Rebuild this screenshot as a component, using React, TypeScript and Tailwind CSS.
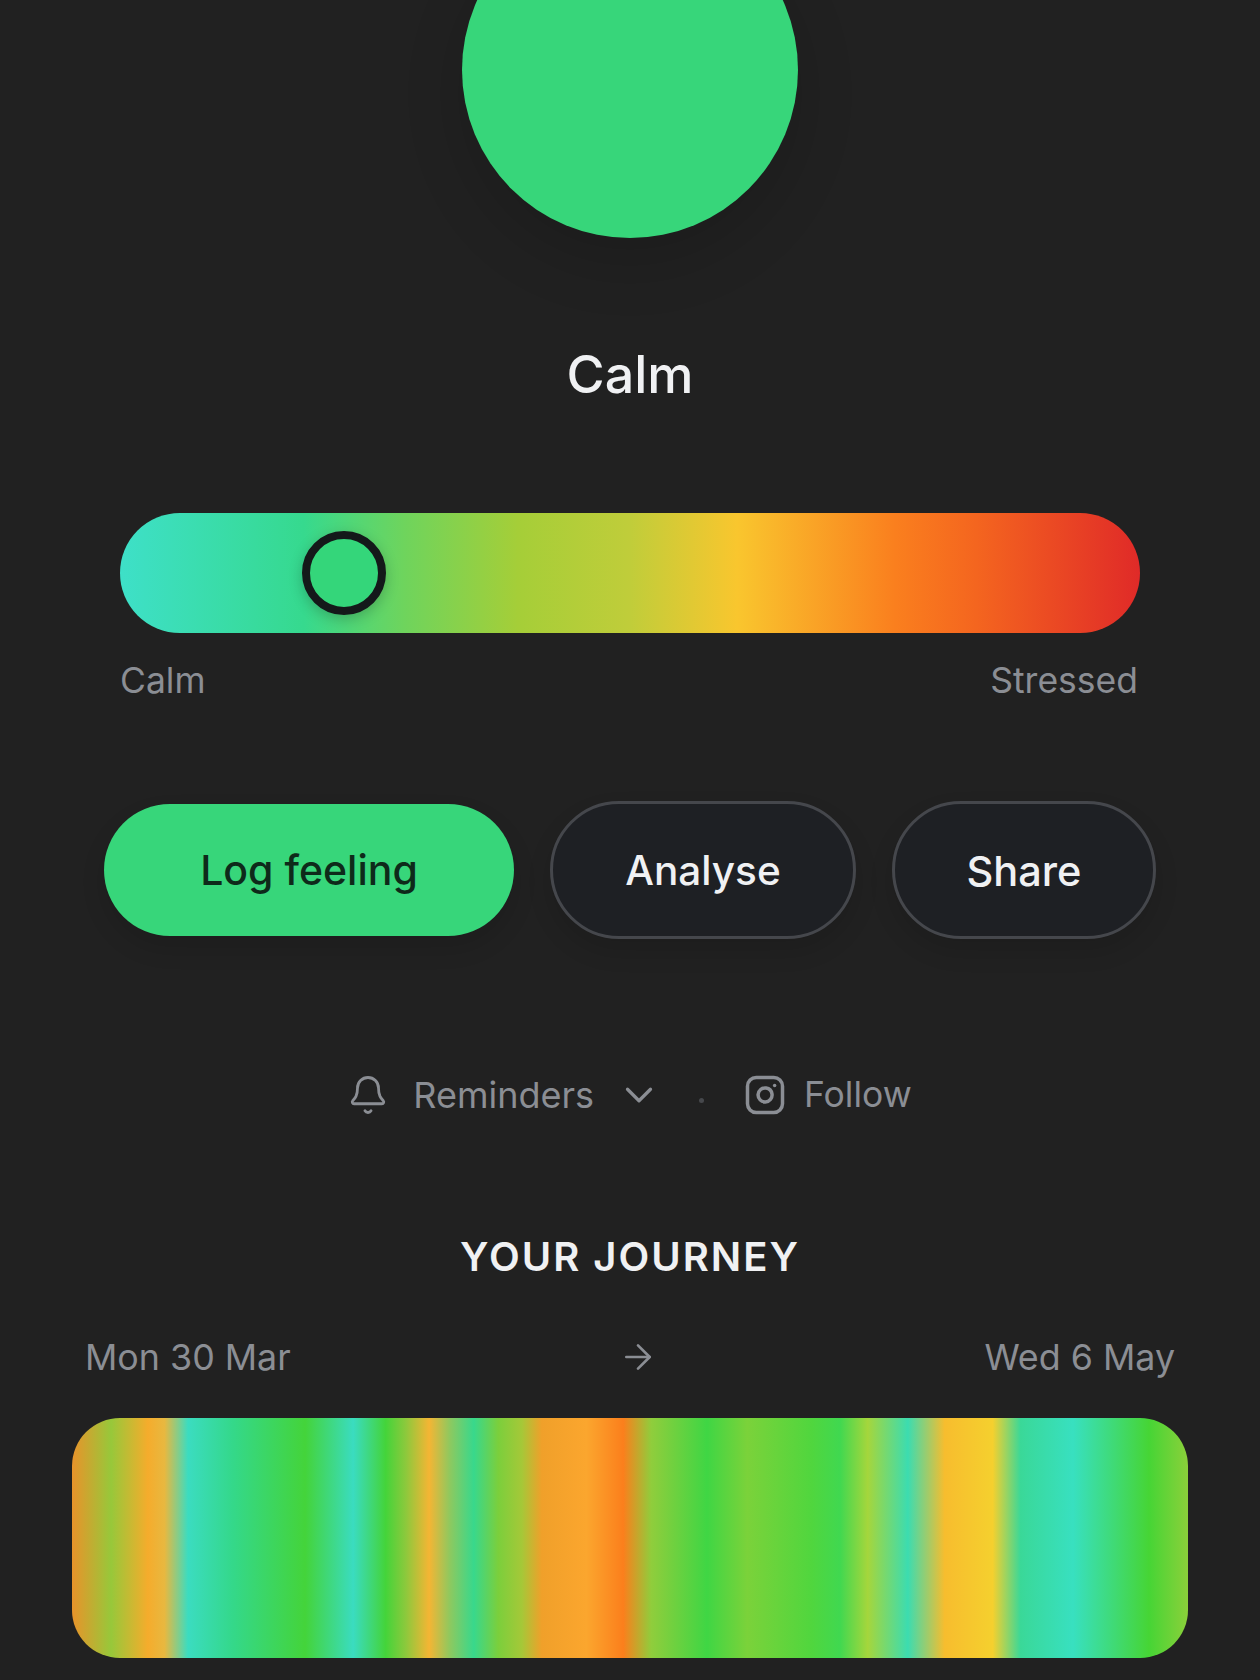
import { ArrowRight, Bell, ChevronDown, Instagram } from "lucide-react";

export default function App() {
  return (
    <div className="flex h-[1680px] w-full flex-col items-center overflow-hidden bg-[#212121] font-['Inter',sans-serif]">
      {/* mood orb, cut off by the top of the screen */}
      <div className="-mt-[98px] size-[336px] shrink-0 rounded-full bg-[#37d67a] shadow-[0_24px_60px_rgba(0,0,0,0.15)]" />

      <h1 className="mt-[109px] h-[56px] text-[52px] leading-[56px] font-medium text-[#f0f1f3]">
        Calm
      </h1>

      {/* slider */}
      <div className="relative mt-[110px] h-[120px] w-[1020px] shrink-0 rounded-[60px] bg-[linear-gradient(90deg,#3ee0c8_0%,#36d98e_18%,#6fd45c_28%,#a5ce38_39%,#c0cd3a_50%,#f9c62e_60.5%,#fa7f1e_76%,#f4651f_84%,#e02a28_100%)]">
        <div className="absolute top-[18px] left-[182px] size-[84px] rounded-full border-[8px] border-[#14191a] bg-[#34d67a] shadow-[0_4px_14px_rgba(0,0,0,0.22)]" />
      </div>
      <div className="mt-[26px] flex h-[44px] w-[1020px] items-center justify-between pr-[2px] text-[35.5px] leading-[44px] text-[#8b8e94]">
        <span>Calm</span>
        <span>Stressed</span>
      </div>

      {/* actions */}
      <div className="mt-[98px] flex items-center gap-[36px]">
        <button className="h-[132px] w-[410px] rounded-[66px] bg-[#37d67a] pt-[2px] text-[41px] font-medium text-[#0e2a1a] shadow-[0_12px_24px_rgba(0,0,0,0.12)]">
          Log feeling
        </button>
        <button className="h-[138px] w-[306px] rounded-[69px] border-[3px] border-[#45474c] bg-[#1e2024] pt-[2px] text-[40.5px] font-medium text-[#f0f1f3] shadow-[0_12px_24px_rgba(0,0,0,0.12)]">
          Analyse
        </button>
        <button className="h-[138px] w-[264px] rounded-[69px] border-[3px] border-[#45474c] bg-[#1e2024] pt-[2px] text-[41.5px] font-medium text-[#f0f1f3] shadow-[0_12px_24px_rgba(0,0,0,0.12)]">
          Share
        </button>
      </div>

      {/* reminders and follow */}
      <div className="mt-[134px] -ml-[1px] flex h-[44px] items-center text-[36px] leading-[44px] text-[#8b8e94]">
        <Bell size={42} strokeWidth={1.6} />
        <span className="ml-[24px]">Reminders</span>
        <ChevronDown size={46} strokeWidth={1.7} className="ml-[22px]" />
        <span className="mt-[10px] ml-[37px] size-[5px] rounded-full bg-[#46484c]" />
        <Instagram size={42} strokeWidth={2} className="ml-[40px]" />
        <span className="ml-[18px] text-[35.5px]">Follow</span>
      </div>

      {/* journey */}
      <h2 className="mt-[118px] h-[44px] text-[40px] leading-[44px] font-semibold tracking-[0.05em] text-[#f0f1f3]">
        YOUR JOURNEY
      </h2>
      <div className="mt-[56px] flex h-[44px] w-[1090px] items-center justify-between text-[35.8px] leading-[44px] text-[#8b8e94]">
        <span>Mon 30 Mar</span>
        <ArrowRight size={40} strokeWidth={1.6} />
        <span>Wed 6 May</span>
      </div>
      <div className="mt-[39px] h-[240px] w-[1116px] shrink-0 rounded-[48px] bg-[linear-gradient(90deg,#e9932a_0%,#97c83a_3.5%,#f5ac2c_6.8%,#e8b840_8.3%,#3bdcc0_10.4%,#34d88a_14.4%,#44d43a_20.9%,#3adcc0_25.2%,#44d43a_28.1%,#8cc93c_29.9%,#f4b534_32%,#8cc960_33.9%,#38d88c_36%,#7bcf3c_38.2%,#a5c838_40.3%,#f0a02a_42.1%,#fba62e_46.1%,#fb7f1c_49.4%,#90cd3c_51.9%,#3fd644_56.9%,#7bd23a_60.5%,#50d63e_66.3%,#40d850_68.8%,#a5d63c_71.3%,#3cdcb0_74.9%,#f7bd2e_78.2%,#f5d02e_82.5%,#3ad898_85%,#38e0c0_89.7%,#46d535_96.5%,#8bd03a_100%)]" />
    </div>
  );
}
